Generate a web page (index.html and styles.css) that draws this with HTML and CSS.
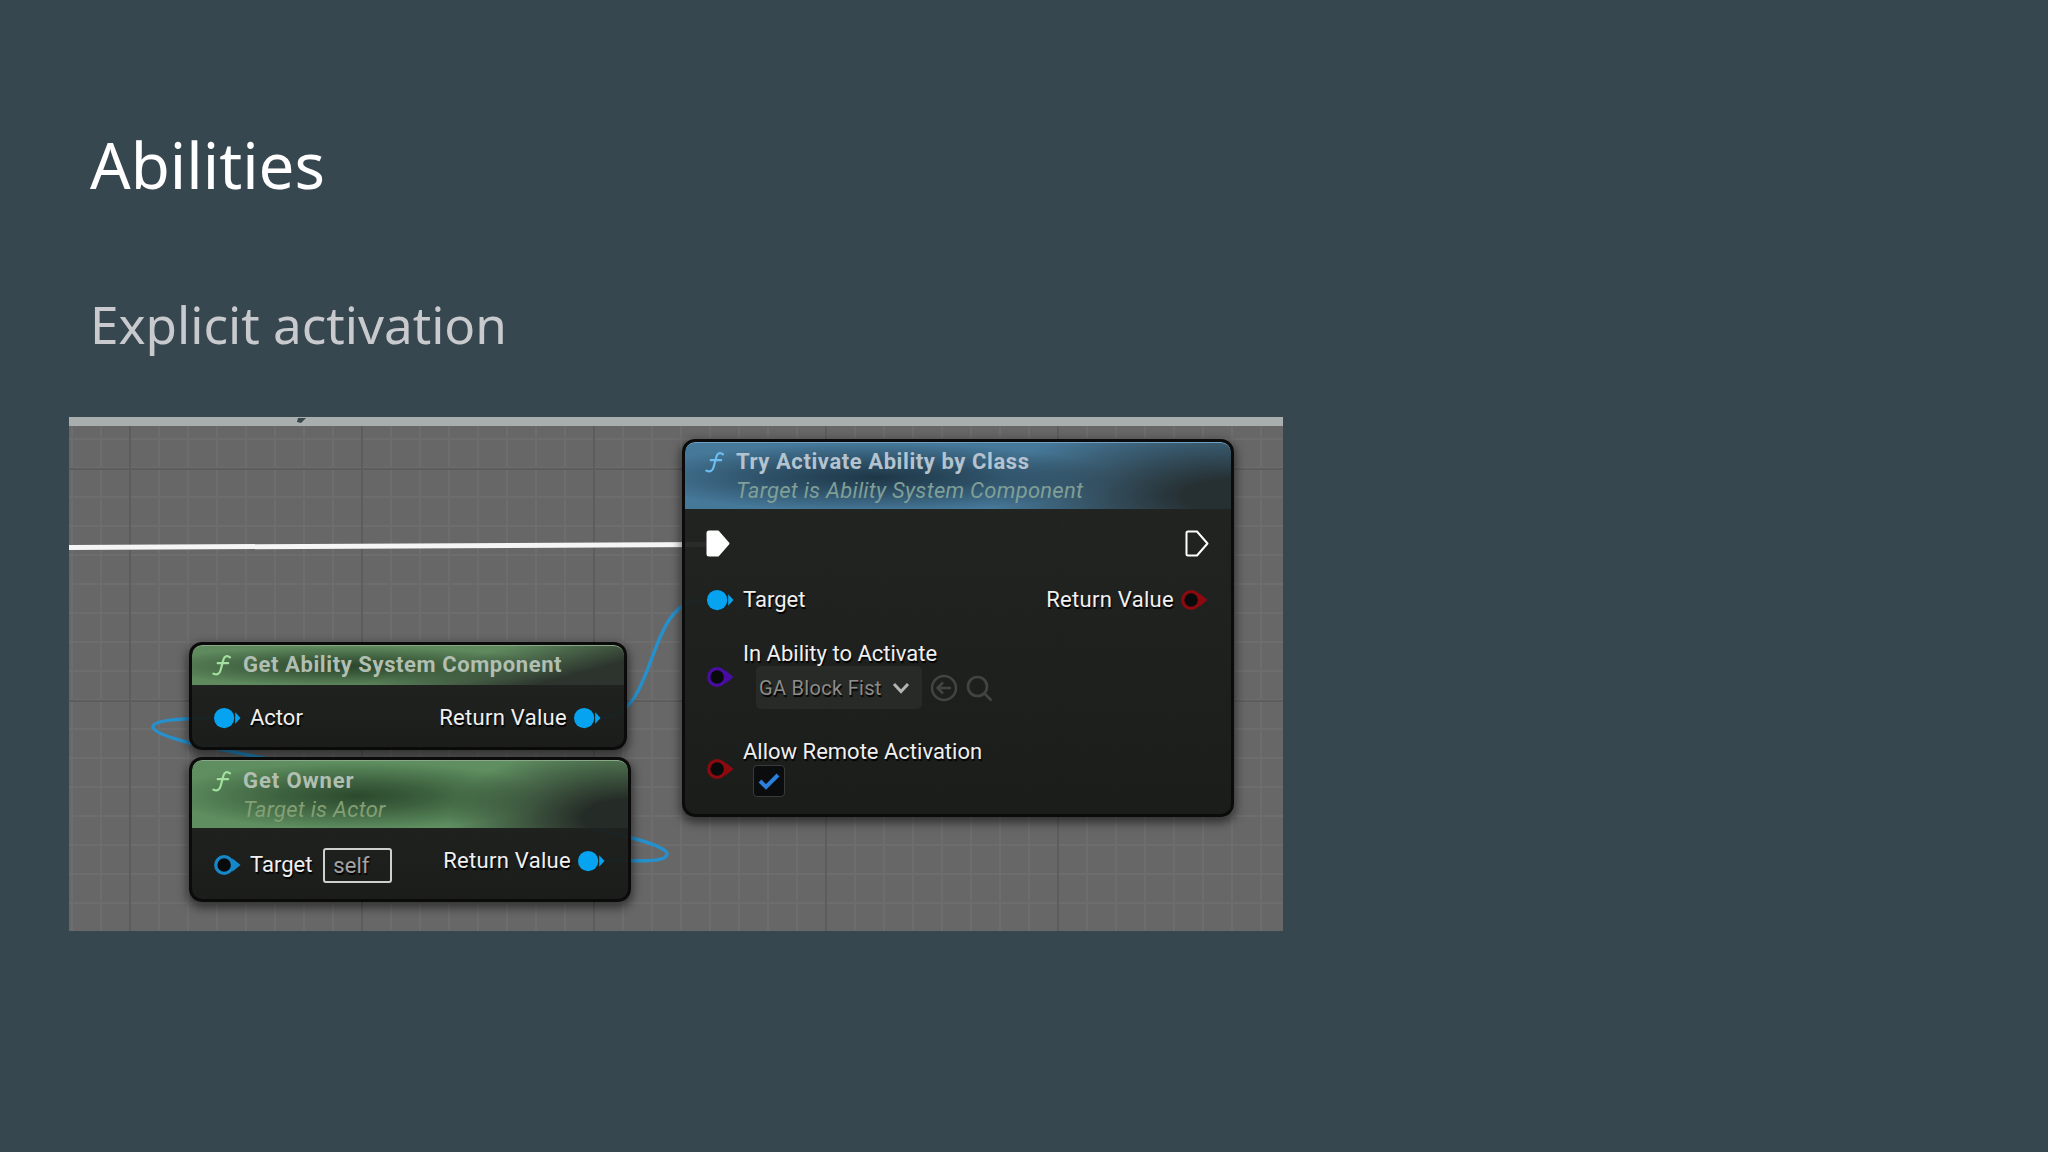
FILE: index.html
```
<!DOCTYPE html>
<html lang="en">
    <head>
        <meta charset="utf-8">
        <link rel="stylesheet" href="styles.css">
        <title>Abilities</title>
    </head>
    <body>
        <svg class="defs" width="0" height="0">
            <symbol id="func" viewBox="0 0 20 24">
                <path d="M19 3.500C16 1 13 2 12 6L9 17C8 21 5 22.500 1.500 20.500M6 9.500H17" fill="none" stroke="currentColor" stroke-width="2.300" stroke-linecap="round"/>
            </symbol>
            <symbol id="pin" viewBox="0 0 28 22">
                <circle cx="10.500" cy="11" r="10.500" fill="currentColor"/>
                <path d="M22 5L27.500 11L22 17Z" fill="currentColor"/>
            </symbol>
            <symbol id="pin-open" viewBox="0 0 28 22">
                <path d="M19 4L27.500 11L19 18Z" fill="currentColor"/>
                <circle cx="10.500" cy="11" r="8.700" fill="#080a0c" stroke="currentColor" stroke-width="3.400"/>
            </symbol>
            <symbol id="exec" viewBox="0 0 24 27">
                <path d="M3 1.500H12L22.500 13.500L12 25.500H3Q1.500 25.500 1.500 24V3Q1.500 1.500 3 1.500Z" stroke="#fff" stroke-width="2" stroke-linejoin="round"/>
            </symbol>
        </svg>

        <div class="slide">
            <h1>Abilities</h1>
            <h2>Explicit activation</h2>

            <div class="graph">
                <div class="topbar"></div>
                <svg class="wires" viewBox="0 0 1214 514">
                    <path class="cut" d="M229 1h8l-5 5l-4 -1z"/>
                    <path class="wire white" d="M0 130.500L637 127.500"/>
                    <path class="wire" d="M530 301C592 301 573 183 635 183"/>
                    <path class="wire" d="M160 301C96 301 84 305 84 310C84 315 102 321 121 326L189 340C300 360 460 394 563 421C582 426 598 432 598 437C598 444 582 445 532 443"/>
                </svg>

                <div class="node component">
                    <div class="header">
                        <svg class="func"><use href="#func"/></svg>
                        <div class="title">Get Ability System Component</div>
                    </div>
                    <div class="row">
                        <svg class="pin"><use href="#pin"/></svg>
                        <span>Actor</span>
                        <span class="out wide">Return Value</span>
                        <svg class="pin"><use href="#pin"/></svg>
                    </div>
                </div>

                <div class="node owner">
                    <div class="header">
                        <svg class="func"><use href="#func"/></svg>
                        <div>
                            <div class="title">Get Owner</div>
                            <div class="subtitle">Target is Actor</div>
                        </div>
                    </div>
                    <div class="row">
                        <svg class="pin open"><use href="#pin-open"/></svg>
                        <span>Target</span>
                        <span class="self">self</span>
                        <div class="out return">
                            <span class="wide">Return Value</span>
                            <svg class="pin"><use href="#pin"/></svg>
                        </div>
                    </div>
                </div>

                <div class="node activate">
                    <div class="header">
                        <svg class="func"><use href="#func"/></svg>
                        <div>
                            <div class="title">Try Activate Ability by Class</div>
                            <div class="subtitle">Target is Ability System Component</div>
                        </div>
                    </div>
                    <div class="row exec-row">
                        <svg class="exec full"><use href="#exec"/></svg>
                        <svg class="exec out"><use href="#exec"/></svg>
                    </div>
                    <div class="row target-row">
                        <svg class="pin"><use href="#pin"/></svg>
                        <span>Target</span>
                        <span class="out wide">Return Value</span>
                        <svg class="pin red"><use href="#pin-open"/></svg>
                    </div>
                    <div class="row class-row">
                        <svg class="pin purple"><use href="#pin-open"/></svg>
                        <div>
                            <div class="label">In Ability to Activate</div>
                            <div class="picker">
                                <div class="select">
                                    <span>GA Block Fist</span>
                                    <svg width="18" height="12" viewBox="0 0 18 12"><path d="M2 2L9 9.500L16 2" fill="none" stroke="#b4b4b2" stroke-width="3"/></svg>
                                </div>
                                <svg width="28" height="28" viewBox="0 0 28 28" fill="none" stroke="#434441" stroke-width="2.500"><circle cx="14" cy="14" r="12"/><path d="M21 14H8M13 8.500L7.500 14L13 19.500"/></svg>
                                <svg width="28" height="28" viewBox="0 0 28 28" fill="none" stroke="#434441" stroke-width="2.700"><circle cx="11.500" cy="12.500" r="9.500"/><path d="M18 19L25.500 26.500"/></svg>
                            </div>
                        </div>
                    </div>
                    <div class="row remote-row">
                        <svg class="pin red"><use href="#pin-open"/></svg>
                        <div>
                            <div class="label">Allow Remote Activation</div>
                            <div class="checkbox">
                                <svg width="22" height="18" viewBox="0 0 22 18"><path d="M2 9L8 15L20 3" fill="none" stroke="#2a80dc" stroke-width="4"/></svg>
                            </div>
                        </div>
                    </div>
                </div>
            </div>
        </div>
    </body>
</html>
```
FILE: styles.css
```
body {
    margin: 0;
    background-color: #37474f;
    font-family: "Noto Sans", sans-serif;
}
.defs {
    position: absolute;
}
.slide {
    box-sizing: border-box;
    height: 1152px;
    padding: 119px 69px 0;
    overflow: hidden;
}
h1, h2 {
    margin: 0 0 0 21px;
    font-weight: 400;
}
h1 {
    height: 161px;
    color: #fff;
    font-size: 63.7px;
    line-height: 91px;
}
h2 {
    height: 137px;
    color: #c8cacd;
    font-size: 51.2px;
    line-height: 88px;
}
.graph {
    position: relative;
    width: 1214px;
    height: 514px;
    overflow: hidden;
    color: #f0f0f0;
    font-family: Roboto, sans-serif;
    font-size: 22px;
    background-color: #676767;
    background-image:
        linear-gradient(to right, #5d5d5d 2px, transparent 2px),
        linear-gradient(to bottom, #5d5d5d 2px, transparent 2px),
        linear-gradient(to right, #6d6d6d 2px, transparent 2px),
        linear-gradient(to bottom, #6d6d6d 2px, transparent 2px);
    background-size: 232px 232px, 232px 232px, 29px 29px, 29px 29px;
    background-position: 60px 0, 0 51px, 2px 0, 0 21px;
}
.topbar {
    height: 9px;
    background-color: #a9afae;
}
.wires {
    position: absolute;
    left: 0;
    top: 0;
    width: 1214px;
    height: 514px;
}
.wire {
    fill: none;
    stroke: #2590cb;
    stroke-width: 3.5;
}
.wire.white {
    stroke: #f5f5f5;
    stroke-width: 5;
}
.cut {
    fill: #37474a;
}

/* nodes sit freely on the graph canvas */
.node {
    position: absolute;
    box-sizing: border-box;
    border: 3px solid #0a0b0a;
    border-radius: 13px;
    overflow: hidden;
    /* slightly see-through, wires show faintly underneath */
    background: linear-gradient(rgba(30, 32, 29, 0.93), rgba(23, 25, 22, 0.95));
    box-shadow: 0 4px 10px 2px rgba(0, 0, 0, 0.5);
}
.component {
    left: 120px;
    top: 225px;
    width: 438px;
    height: 108px;
}
.owner {
    left: 120px;
    top: 340px;
    width: 442px;
    height: 145px;
}
.activate {
    left: 613px;
    top: 22px;
    width: 552px;
    height: 378px;
}
.header {
    box-sizing: border-box;
    display: flex;
    height: 68px;
    padding: 5px 20px;
    line-height: 29px;
    border-top: 1px solid #8aa888;
    border-radius: 10px 10px 0 0;
    background:
        radial-gradient(ellipse 190px 34px at 38% 52%, rgba(38, 66, 40, 0.9), rgba(38, 66, 40, 0.6) 40%, transparent),
        radial-gradient(ellipse 180px 75px at 100% 85%, #252c27 25%, transparent),
        #5f8f60;
}
.component .header {
    height: 40px;
    padding-top: 4px;
    background:
        radial-gradient(ellipse 200px 20px at 36% 52%, rgba(38, 62, 38, 0.9), rgba(38, 62, 38, 0.6) 40%, transparent),
        linear-gradient(165deg, transparent 55%, #2c342d 85%),
        #5f8a5e;
}
.activate .header {
    height: 67px;
    padding-top: 4px;
    border-top-color: #6fa0c4;
    background:
        radial-gradient(ellipse 240px 34px at 35% 52%, rgba(26, 48, 62, 0.9), rgba(26, 48, 62, 0.6) 40%, transparent),
        radial-gradient(ellipse 240px 80px at 100% 80%, #263033 20%, transparent),
        #467899;
}
.func {
    flex: none;
    width: 19px;
    height: 23px;
    margin: 4px 12px 0 0;
    color: #a3e0a0;
}
.activate .func {
    color: #6cbdf0;
}
.title {
    color: #b1bfb2;
    font-weight: 700;
    letter-spacing: 0.58px;
    white-space: nowrap;
}
.owner .title {
    letter-spacing: 0.9px;
}
.activate .title {
    color: #b3c3d0;
}
.subtitle {
    color: #839f74;
    font-style: italic;
    letter-spacing: 0.26px;
    white-space: nowrap;
}
.activate .subtitle {
    color: #7f9f97;
}
.row {
    box-sizing: border-box;
    display: flex;
    align-items: center;
    padding: 0 23px 0 22px;
    line-height: 28px;
    white-space: nowrap;
    text-shadow: 1px 2px 1px #000;
}
.pin {
    flex: none;
    width: 27px;
    height: 22px;
    margin-right: 9px;
    color: #06a4f0;
}
.pin:last-child {
    margin: 1px 0 0 7px;
}
.out {
    margin-left: auto;
}
.wide {
    letter-spacing: 0.3px;
}
.component .row {
    height: 65px;
}
.owner .row {
    height: 74px;
}
.pin.open {
    color: #1688ca;
}
.self {
    box-sizing: border-box;
    width: 69px;
    height: 35px;
    margin-left: 11px;
    padding-left: 8px;
    border: 2px solid #cfcfcf;
    border-radius: 3px;
    color: #a3a3a3;
    line-height: 31px;
}
.return {
    display: flex;
    align-items: center;
    margin-bottom: 9px;
}
.exec {
    width: 24px;
    height: 27px;
    fill: none;
}
.exec.full {
    fill: #fff;
}
.exec-row {
    height: 69px;
    padding-left: 21px;
    padding-right: 22px;
}
.target-row {
    height: 43px;
}
.pin.red {
    color: #8b0a10;
}
.pin.purple {
    color: #4a0da3;
}
.class-row {
    height: 74px;
    margin-top: 17px;
    align-items: flex-start;
}
.class-row .label {
    height: 26px;
    padding-top: 2px;
}
.class-row .pin {
    margin-top: 28px;
}
.picker {
    display: flex;
    align-items: center;
    gap: 8px;
    margin-left: 13px;
}
.select {
    box-sizing: border-box;
    display: flex;
    align-items: center;
    justify-content: space-between;
    width: 166px;
    height: 43px;
    padding: 0 12px 0 3px;
    border-radius: 5px;
    background-color: #282a27;
    color: #8b8c89;
    font-size: 20px;
    letter-spacing: 0.3px;
}
.remote-row {
    height: 62px;
    margin-top: 26px;
    align-items: flex-start;
}
.remote-row .pin {
    margin-top: 20px;
}
.checkbox {
    box-sizing: border-box;
    display: flex;
    align-items: center;
    justify-content: center;
    width: 32px;
    height: 32px;
    margin: -1px 0 0 10px;
    border: 1px solid #383a3b;
    border-radius: 4px;
    background-color: #0b0c0e;
}
```
